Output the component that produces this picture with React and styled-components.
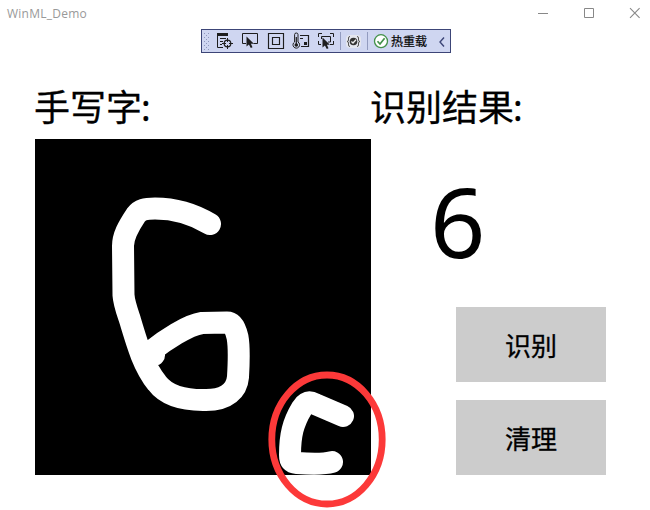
import React from "react";
import styled, { createGlobalStyle } from "styled-components";

const Global = createGlobalStyle`
  html, body { margin: 0; background: #fff; }
  * { box-sizing: border-box; }
  svg { display: block; flex: none; }
`;

const Window = styled.div`
  position: relative;
  width: 650px;
  height: 510px;
  overflow: hidden;
  background: #fff;
  color: #000;
  font-family: "Noto Sans", "Noto Sans CJK SC", sans-serif;
`;

const TitleBar = styled.header`
  display: flex;
  justify-content: space-between;
  height: 29px;
  padding-left: 7px;
`;

const Title = styled.span`
  font-family: "Open Sans", sans-serif;
  font-size: 12px;
  line-height: 27px;
  letter-spacing: 0.25px;
  color: #999;
`;

const DebugBar = styled.div`
  display: flex;
  align-items: center;
  width: 250px;
  height: 24px;
  margin-left: 201px;
  border: 1px solid #3c4577;
  background: #cfd6f1;
`;

const HotReload = styled.span`
  width: 37px;
  margin-left: 2px;
  font-family: "Noto Sans CJK SC", sans-serif;
  font-size: 12px;
  line-height: 22px;
  white-space: nowrap;
  -webkit-text-stroke: 0.25px #1e1e1e;
`;

const Content = styled.main`
  display: grid;
  grid-template-columns: 336px 235px;
  padding: 28px 0 0 35px;
`;

const Heading = styled.h2`
  align-self: flex-start;
  height: 58px;
  margin: 0 0 0 -1px;
  font-size: 36px;
  font-weight: 400;
  line-height: 53px;
  white-space: nowrap;
  -webkit-text-stroke: 0.3px #000;
`;

const Colon = styled.span`
  margin-left: -1px;
`;

const Canvas = styled.div`
  width: 336px;
  height: 336px;
  background: #000;
`;

const Results = styled.section`
  display: flex;
  flex-direction: column;
  align-items: flex-end;
`;

const Digit = styled.div`
  width: 176px;
  height: 168px;
  font-size: 97px;
  line-height: 162px;
`;

const ActionButton = styled.button`
  width: 150px;
  height: 75px;
  margin: 0 0 18px;
  padding: 0;
  border: 0;
  background: #ccc;
  color: #000;
  font-family: "Noto Sans CJK SC", sans-serif;
  font-size: 26px;
  -webkit-text-stroke: 0.3px #000;
`;

const Highlight = styled.svg`
  position: absolute;
  left: 267px;
  top: 370px;
`;

function WindowControls() {
  return (
    <svg width="120" height="26" fill="none" stroke="#888" strokeWidth="1">
      <path d="M8 13.5H18M54.5 8.5H63.5V17.5H54.5Z" />
      <path d="M100 8.2L109.6 17.8M109.6 8.2L100 17.8" strokeWidth="1.1" />
    </svg>
  );
}

function Grip() {
  return (
    <g stroke="#8e97bd">
      {[4, 6, 8, 10, 12, 14, 16, 18, 20].map((y) => (
        <path key={y} d={y % 4 ? `M5 ${y}.5h1` : `M3 ${y}.5h1M7 ${y}.5h1`} />
      ))}
    </g>
  );
}

function Cursor() {
  return <path d="M0 0V10L2.4 8L4.3 11.6L6 10.8L4.4 7.2H7.4Z" fill="#1e1e1e" stroke="none" />;
}

function ToolIcons() {
  return (
    <svg width="187" height="22" viewBox="1 1 187 22" fill="none" stroke="#1e1e1e">
      <Grip />
      <path d="M16 5.5H27" strokeWidth="3" />
      <path d="M16.5 6V18.5H22M19 9.5H25M19 12.5H22M19 15.5H21" />
      <circle cx="26.5" cy="14.5" r="3.3" strokeWidth="1.2" />
      <path d="M26.5 9V13M26.5 16V20M21 14.5H25M28 14.5H32" />
      <path d="M45 14.5H41.5V4.5H56.5V14.5H52.5" />
      <g transform="translate(45.5 7.5)"><Cursor /></g>
      <path d="M67.5 4.5H82.5V19.5H67.5ZM71.5 8.5H78.5V15.5H71.5Z" strokeWidth="1.15" />
      <path d="M93.6 13V5.5Q93.6 4 95.3 4T97 5.5V13A3.3 3.3 0 1 1 93.6 13Z" />
      <circle cx="95.3" cy="16" r="1.8" fill="#1e1e1e" stroke="none" />
      <path d="M95.3 8V16M99 6.5H107.5V17.5H100M99 9.5H102" strokeWidth="1.2" />
      <path d="M103 13H106V16H103Z" fill="#1e1e1e" stroke="none" />
      <path d="M117.5 8V4.5H121M129 4.5H132.5V8M117.5 12V15.5H120M129 15.5H132.5V12M120.5 10V7.5H129.5V13H127" />
      <g transform="translate(121.5 8.5)"><Cursor /></g>
      <path d="M139.5 3V21M166.5 3V21" stroke="#929bbf" />
      <rect x="145" y="6" width="15" height="13" rx="4" fill="#e4e6ee" stroke="none" />
      <path d="M149 7.5Q147.5 7.5 147.5 9V11Q147.5 12.5 146 12.5Q147.5 12.5 147.5 14V16Q147.5 17.5 149 17.5M156 7.5Q157.5 7.5 157.5 9V11Q157.5 12.5 159 12.5Q157.5 12.5 157.5 14V16Q157.5 17.5 156 17.5" stroke="#555" />
      <circle cx="152.5" cy="12.5" r="3.8" fill="#333" stroke="none" />
      <path d="M150.4 12.5L152 14L155 10.7" stroke="#eee" strokeWidth="1.3" />
      <circle cx="180" cy="12.2" r="6.5" fill="#fff" stroke="#43914a" strokeWidth="1.3" />
      <path d="M176.5 12.2L179 15L183.6 9.2" stroke="#43914a" strokeWidth="1.7" />
    </svg>
  );
}

export default function App() {
  return (
    <Window>
      <Global />
      <TitleBar>
        <Title>WinML_Demo</Title>
        <WindowControls />
      </TitleBar>
      <DebugBar>
        <ToolIcons />
        <HotReload>热重载</HotReload>
        <svg width="22" height="22" fill="none" stroke="#3c4577" strokeWidth="1.4">
          <path d="M16 7.5L12 12L16 16.5" />
        </svg>
      </DebugBar>
      <Content>
        <section>
          <Heading>手写字<Colon>:</Colon></Heading>
          <Canvas>
            <svg width="336" height="336" viewBox="35 139 336 336" fill="none" stroke="#fff" strokeWidth="22" strokeLinecap="round" strokeLinejoin="round">
              <path d="M210 224C195 215 178 208.5 155 208.5C145 208.5 140 209.5 136 215C128 227 123 236 123 246L123.5 295C124 303 127 311 130 320C138 347 144 367 157 383C166 395 181 400 203 400C228 401 237 389 238 377C239 360 239 345 237.5 337C235 326 231 322.5 227 322.5L202 323C188 325 165 340 150 352L154 355" />
              <path d="M343 416L315 404C309 401 306 402 302 408C293 423 290 435 290 455C290 461 292 462.5 297 463C311 464 325 464 332 462" />
            </svg>
          </Canvas>
        </section>
        <Results>
          <Heading>识别结果<Colon>:</Colon></Heading>
          <Digit>6</Digit>
          <ActionButton>识别</ActionButton>
          <ActionButton>清理</ActionButton>
        </Results>
      </Content>
      <Highlight width="121" height="139" fill="none">
        <ellipse cx="60" cy="69.5" rx="55.2" ry="64.5" stroke="#fc3939" strokeWidth="6.8" />
      </Highlight>
    </Window>
  );
}
